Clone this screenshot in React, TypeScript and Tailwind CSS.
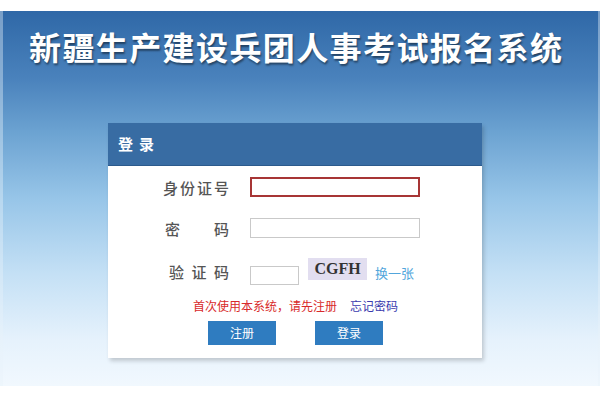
import React from 'react';

const cjk = { fontFamily: '"Noto Sans CJK SC", "Noto Sans", sans-serif' };

const Label: React.FC<{ chars: string[]; className?: string }> = ({ chars, className = '' }) => (
  <div className={`flex justify-between text-[15px] text-[#555] font-medium leading-none ${className}`}>
    {chars.map((c, i) => (
      <span key={i}>{c}</span>
    ))}
  </div>
);

export default function App() {
  return (
    <div className="w-[600px] h-[400px] bg-white overflow-hidden" style={cjk}>
      <div className="h-[11px] bg-white" />
      <div className="h-[375px] bg-[linear-gradient(to_bottom,#2f68a7_0%,#4a82bc_18%,#6ba2d1_32%,#97c5e8_50%,#c4e0f5_70%,#e6f2fc_88%,#f1f8fe_100%)] border-l-[3px] border-r-[2px] border-[#e9f3fb]/40">
        <div className="pt-[17px] pl-[26px] h-[112px]">
          <h1 className="text-[32px] font-bold text-white leading-[36px] tracking-[1.4px] [text-shadow:1px_2px_2px_rgba(0,0,0,0.45)]">
            新疆生产建设兵团人事考试报名系统
          </h1>
        </div>

        {/* Login card */}
        <div className="ml-[105px] w-[374px] h-[235px] bg-white shadow-[2px_3px_4px_rgba(0,0,0,0.18)] flex flex-col">
          <div className="h-[43px] bg-[#386ca3] flex items-center pl-[10px] border-b border-[#2c5a8c]">
            <span className="text-white text-[15px] font-bold tracking-[6px]">登录</span>
          </div>

          <div className="pt-[11px] flex flex-col">
            <div className="flex items-center h-[20px]">
              <Label chars={['身', '份', '证', '号']} className="ml-[55px] w-[66px]" />
              <div className="ml-[21px] w-[170px] h-[20px] border-2 border-[#a73535] bg-white" />
            </div>

            <div className="flex items-center h-[20px] mt-[21px]">
              <Label chars={['密', '码']} className="ml-[57px] w-[64px]" />
              <div className="ml-[21px] w-[170px] h-[20px] border border-[#c9c9c9] bg-white" />
            </div>

            <div className="flex items-start h-[28px] mt-[20px]">
              <Label chars={['验', '证', '码']} className="ml-[61px] w-[60px] mt-[6px]" />
              <div className="ml-[21px] mt-[8px] w-[49px] h-[19px] border border-[#c9c9c9] bg-white" />
              <div
                className="ml-[9px] w-[59px] h-[22px] bg-[#e2def0] flex items-center justify-center text-[16px] font-bold text-[#333]"
                style={{ fontFamily: '"Liberation Serif", serif' }}
              >
                CGFH
              </div>
              <span className="ml-[8px] mt-[8px] text-[13px] text-[#52a6dc] leading-none">换一张</span>
            </div>

            <div className="flex items-center h-[14px] mt-[13px] text-[12px] leading-none">
              <span className="ml-[85px] text-[#d82a2a]">首次使用本系统，请先注册</span>
              <span className="ml-[13px] text-[#3a3aae]">忘记密码</span>
            </div>

            <div className="flex mt-[8px]">
              <button className="ml-[100px] w-[68px] h-[24px] bg-[#2f7cc0] text-white text-[12px]">注册</button>
              <button className="ml-[39px] w-[68px] h-[24px] bg-[#2f7cc0] text-white text-[12px]">登录</button>
            </div>
          </div>
        </div>
      </div>
    </div>
  );
}
